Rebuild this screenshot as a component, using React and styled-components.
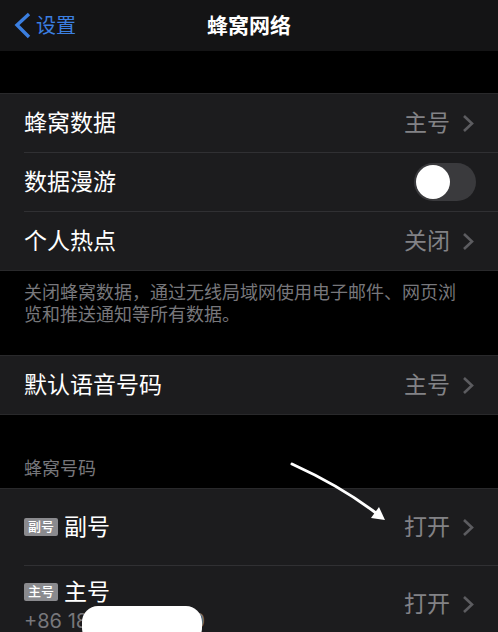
import React from "react";
import styled, { createGlobalStyle } from "styled-components";

const GlobalStyle = createGlobalStyle`
  * {
    box-sizing: border-box;
  }

  body {
    margin: 0;
    background: #000;
    color: #fff;
    font-family: "Liberation Sans", "Noto Sans CJK SC", sans-serif;
  }
`;

const Page = styled.main`
  height: 100vh;
  overflow: hidden;
`;

const NavBar = styled.header`
  display: grid;
  grid-template-columns: 1fr auto 1fr;
  align-items: center;
  height: 51px;
  padding: 0 14px;
  background: #141415;
`;

const BackLink = styled.a`
  display: flex;
  align-items: center;
  gap: 4px;
  color: #3b7fe0;
  font-size: 20px;
  line-height: 24px;
  text-decoration: none;
`;

const Title = styled.h1`
  margin: 0;
  font-size: 21px;
  font-weight: 700;
  line-height: 24px;
`;

const Group = styled.section`
  position: relative;
  padding-left: 24px;
  background: #1c1c1e;
  border-bottom: 1px solid #29292b;
  box-shadow: inset 0 1px #29292b;
`;

const FirstGroup = styled(Group)`
  margin-top: 42px;
`;

const Row = styled.div`
  display: flex;
  align-items: center;
  justify-content: space-between;
  width: 100%;
  min-height: ${({ $tall }) => ($tall ? "77px" : "59px")};
  padding: 0 22px 0 0;
  border: 0;
  border-top: 1px solid #303033;
  background: none;
  color: inherit;
  font-family: inherit;
  font-size: 23px;
  line-height: 28px;
  text-align: left;

  &:first-child {
    border-top-color: transparent;
  }
`;

const Value = styled.span`
  display: flex;
  align-items: center;
  gap: 12px;
  color: #828286;
`;

const Switch = styled.input`
  appearance: none;
  width: 62px;
  height: 38px;
  margin: 0;
  padding: 2px;
  border-radius: 19px;
  background: #3a3a3d;

  &::before {
    content: "";
    display: block;
    width: 34px;
    height: 34px;
    border-radius: 50%;
    background: #fff;
  }

  &:checked {
    background: #30d158;
  }

  &:checked::before {
    margin-left: auto;
  }
`;

const Note = styled.p`
  margin: 0;
  padding: 11px 30px 29px 24px;
  color: #77777b;
  font-size: 18px;
  line-height: 22px;
`;

const GroupTitle = styled.h2`
  margin: 0;
  padding: 43px 24px 8px;
  color: #77777b;
  font-size: 18px;
  font-weight: 400;
  line-height: 22px;
`;

const Contact = styled.span`
  display: block;
  padding-top: 6px;
`;

const Line = styled.span`
  display: flex;
  align-items: center;
  gap: 6px;
`;

const Badge = styled.span`
  padding: 0 4px;
  border-radius: 2px;
  background: #8a8a8e;
  font-size: 13px;
  font-weight: 500;
  line-height: 18px;
`;

const Phone = styled.span`
  position: relative;
  display: flex;
  justify-content: space-between;
  width: 181px;
  color: #77777b;
  font-family: Inter, sans-serif;
  font-size: 20px;
  line-height: 30px;
`;

const Redaction = styled.span`
  position: absolute;
  top: 0;
  left: 58px;
  width: 120px;
  height: 38px;
  border-radius: 16px;
  background: #fff;
`;

const Pointer = styled.svg`
  position: absolute;
  top: -28px;
  right: 108px;
  pointer-events: none;
`;

const BackIcon = () => (
  <svg width="18" height="28" viewBox="0 0 18 28" fill="none" aria-hidden="true">
    <path d="M15 2L3 13L15 25" stroke="#3b7fe0" strokeWidth="3.4" />
  </svg>
);

const Chevron = () => (
  <svg width="14" height="18" viewBox="0 0 14 18" fill="none" aria-hidden="true">
    <path d="M2 2L10 9.5L2 17" stroke="#5c5c60" strokeWidth="2.6" />
  </svg>
);

const LinkRow = ({ label, value, children, tall }) => (
  <Row as="button" type="button" $tall={tall}>
    {children || <span>{label}</span>}
    <Value>
      {value}
      <Chevron />
    </Value>
  </Row>
);

const App = () => {
  return (
    <>
      <GlobalStyle />
      <Page>
        <NavBar>
          <BackLink href="#settings">
            <BackIcon />
            设置
          </BackLink>
          <Title>蜂窝网络</Title>
        </NavBar>

        <FirstGroup>
          <LinkRow label="蜂窝数据" value="主号" />
          <Row>
            <label htmlFor="roaming">数据漫游</label>
            <Switch id="roaming" type="checkbox" />
          </Row>
          <LinkRow label="个人热点" value="关闭" />
        </FirstGroup>
        <Note>
          关闭蜂窝数据，通过无线局域网使用电子邮件、网页浏览和推送通知等所有数据。
        </Note>

        <Group>
          <LinkRow label="默认语音号码" value="主号" />
        </Group>

        <GroupTitle>蜂窝号码</GroupTitle>
        <Group>
          <LinkRow value="打开" tall>
            <Line>
              <Badge>副号</Badge>
              副号
            </Line>
          </LinkRow>
          <LinkRow value="打开" tall>
            <Contact>
              <Line>
                <Badge>主号</Badge>
                主号
              </Line>
              <Phone>
                <span>+86 18</span>
                <span>0</span>
                <Redaction />
              </Phone>
            </Contact>
          </LinkRow>
          <Pointer width="100" height="64" viewBox="0 0 100 64" aria-hidden="true">
            <path
              d="M2 4C24 14 57 31 86 53"
              fill="none"
              stroke="#fff"
              strokeWidth="3"
              strokeLinecap="round"
            />
            <path d="M89 47L95 60L81 58Z" fill="#fff" />
          </Pointer>
        </Group>
      </Page>
    </>
  );
};

export default App;
